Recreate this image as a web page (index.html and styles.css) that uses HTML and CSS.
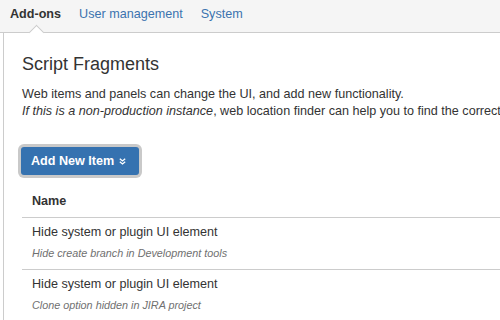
FILE: index.html
```html
<!DOCTYPE html>
<html lang="en">
<head>
  <meta charset="UTF-8" />
  <title>Script Fragments</title>
  <link rel="stylesheet" href="styles.css">
</head>
<body>
  <nav class="tabs">
    <a class="tab active" href="#">Add-ons</a>
    <a class="tab" href="#">User management</a>
    <a class="tab" href="#">System</a>
  </nav>

  <main class="panel">
    <h2 class="title">Script Fragments</h2>
    <p class="intro">
      Web items and panels can change the UI, and add new functionality.<br>
      <em>If this is a non-production instance</em>, web location finder can help you to find the correct location.
    </p>

    <div class="actions">
      <button class="add-btn">Add New Item
        <svg class="chev" width="7" height="7" viewBox="0 0 7 7">
          <path d="M0.8 0.8 L3.5 3 L6.2 0.8 M0.8 3.8 L3.5 6 L6.2 3.8" fill="none" stroke="#fff" stroke-width="1.3" />
        </svg>
      </button>
    </div>

    <table class="fragments">
      <thead>
        <tr><th>Name</th></tr>
      </thead>
      <tbody>
        <tr>
          <td>
            <div class="item-name">Hide system or plugin UI element</div>
            <div class="item-desc">Hide create branch in Development tools</div>
          </td>
        </tr>
        <tr>
          <td>
            <div class="item-name">Hide system or plugin UI element</div>
            <div class="item-desc">Clone option hidden in JIRA project</div>
          </td>
        </tr>
      </tbody>
    </table>
  </main>
</body>
</html>
```

FILE: styles.css
```css
body {
  margin: 0;
  font-family: 'Liberation Sans', Arial, sans-serif;
  font-size: 12.6px;
  color: #333;
  background: #fff;
  overflow: hidden;
}
.tabs {
  display: flex;
  gap: 18px;
  height: 32px;
  padding-left: 10px;
  background: #f5f5f5;
  border-bottom: 1px solid #ccc;
}
.tab {
  position: relative;
  line-height: 28px;
  color: #3b73af;
  text-decoration: none;
}
.tab.active {
  color: #333;
  font-weight: bold;
}
.tab.active::after {
  content: "";
  position: absolute;
  left: 50%;
  bottom: -6px;
  width: 10px;
  height: 10px;
  margin-left: -5px;
  background: #fff;
  border-left: 1px solid #ccc;
  border-top: 1px solid #ccc;
  transform: rotate(45deg);
}
.panel {
  margin-left: 3px;
  border-left: 1px solid #ccc;
  padding: 19px 0 0 18px;
  min-height: 280px;
  overflow: hidden;
}
.title {
  margin: 0 0 10px;
  font-size: 18px;
  font-weight: normal;
  line-height: 24px;
}
.intro {
  margin: 0 0 27px;
  line-height: 17px;
  white-space: nowrap;
}
.actions {
  display: flex;
  margin-left: -1px;
}
.add-btn {
  display: flex;
  align-items: center;
  gap: 5px;
  height: 28px;
  padding: 0 13px 0 10px;
  border: none;
  border-radius: 3px;
  background: #3572b0;
  box-shadow: 0 0 0 3px #c9c9c9;
  color: #fff;
  font-family: inherit;
  font-size: 12.6px;
  font-weight: bold;
}
.fragments {
  width: 520px;
  margin-top: 11px;
  border-collapse: collapse;
}
.fragments th {
  text-align: left;
  padding: 7px 10px;
  line-height: 17px;
  border-bottom: 1px solid #ccc;
}
.fragments td {
  padding: 6px 10px 8px;
  border-bottom: 1px solid #ccc;
}
.item-name {
  line-height: 17px;
}
.item-desc {
  margin-top: 5px;
  line-height: 15px;
  font-size: 10.8px;
  font-style: italic;
  color: #707070;
}
```
